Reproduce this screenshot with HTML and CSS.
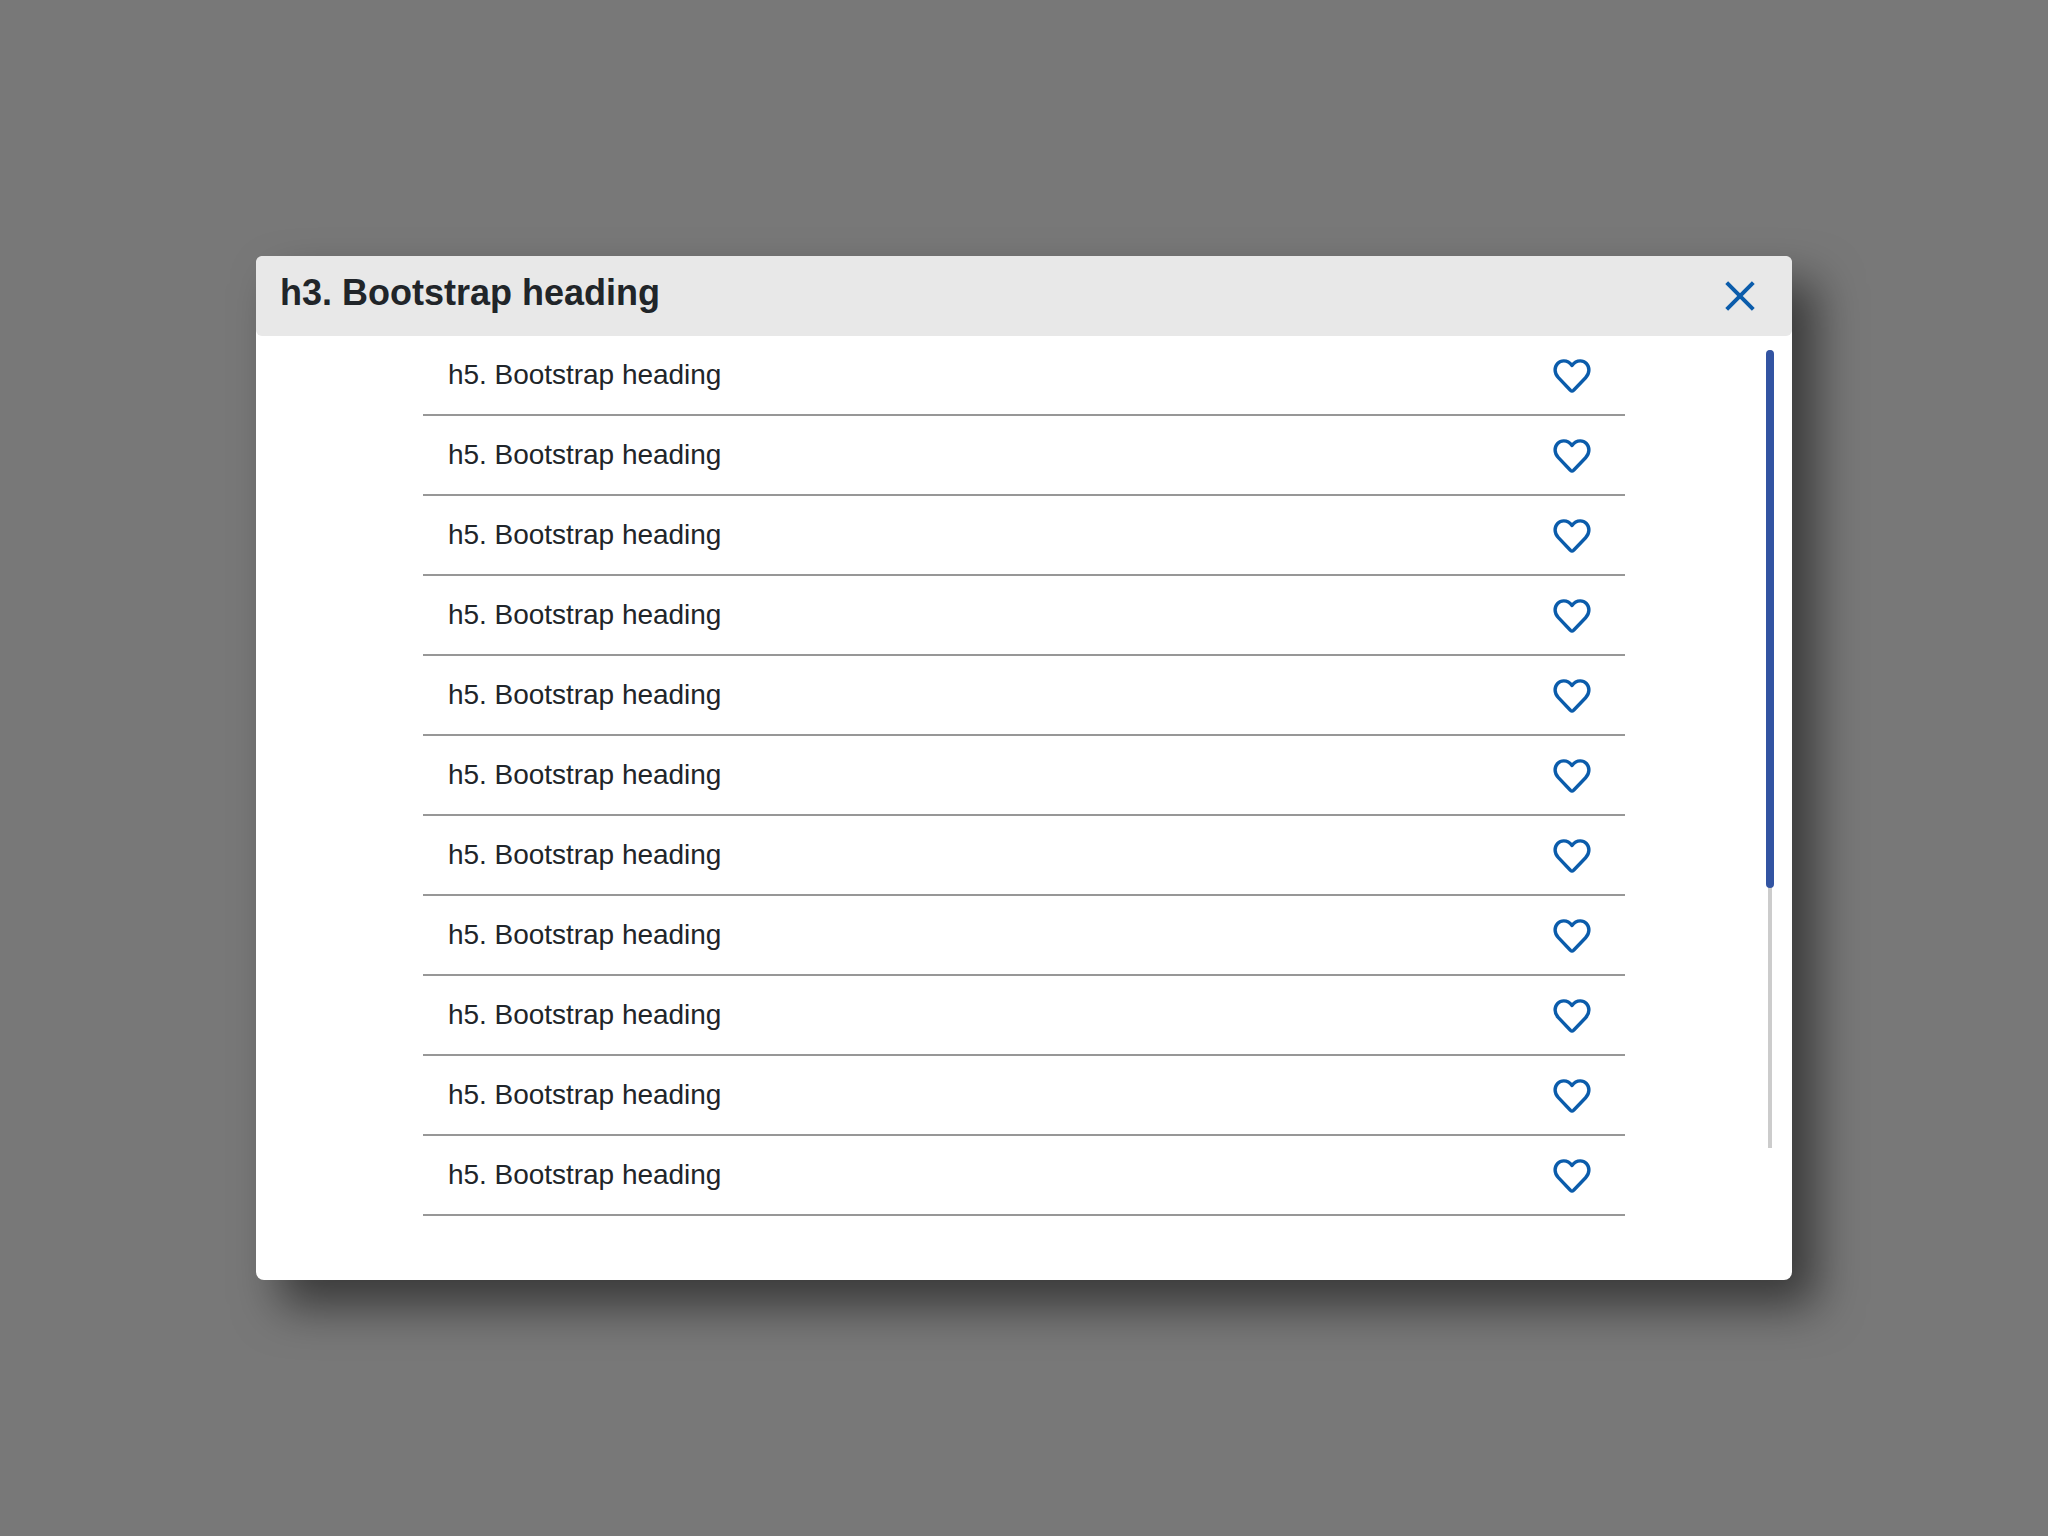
FILE: index.html
```html
<!DOCTYPE html>
<html lang="en">
<head>
<meta charset="utf-8">
<title>Bootstrap heading</title>
<link rel="stylesheet" href="styles.css">
</head>
<body>
<svg class="symbols" aria-hidden="true">
  <symbol id="heart" viewBox="0 0 38 34">
    <path d="M19 6.5C16.7 3.3 13.7 1.9 10.8 1.9C5.9 1.9 2.1 5.7 2.1 11.1C2.1 14.4 3.4 16.6 5.4 18.7L17.4 31.2Q19 32.6 20.6 31.2L32.6 18.7C34.6 16.6 35.9 14.4 35.9 11.1C35.9 5.7 32.1 1.9 27.2 1.9C24.3 1.9 21.3 3.3 19 6.5Z"/>
  </symbol>
</svg>
<section class="modal" role="dialog" aria-labelledby="title">
  <header class="modal-header">
    <h3 class="modal-title" id="title">h3. Bootstrap heading</h3>
    <button class="close" type="button" aria-label="Close"><svg class="close-icon" viewBox="0 0 30 30"><path d="M1.7 1.7L28.3 28.3M28.3 1.7L1.7 28.3"/></svg></button>
  </header>
  <div class="modal-body">
    <ul class="list">
      <li class="row"><h5 class="row-title">h5. Bootstrap heading</h5><svg class="heart"><use href="#heart"/></svg></li>
      <li class="row"><h5 class="row-title">h5. Bootstrap heading</h5><svg class="heart"><use href="#heart"/></svg></li>
      <li class="row"><h5 class="row-title">h5. Bootstrap heading</h5><svg class="heart"><use href="#heart"/></svg></li>
      <li class="row"><h5 class="row-title">h5. Bootstrap heading</h5><svg class="heart"><use href="#heart"/></svg></li>
      <li class="row"><h5 class="row-title">h5. Bootstrap heading</h5><svg class="heart"><use href="#heart"/></svg></li>
      <li class="row"><h5 class="row-title">h5. Bootstrap heading</h5><svg class="heart"><use href="#heart"/></svg></li>
      <li class="row"><h5 class="row-title">h5. Bootstrap heading</h5><svg class="heart"><use href="#heart"/></svg></li>
      <li class="row"><h5 class="row-title">h5. Bootstrap heading</h5><svg class="heart"><use href="#heart"/></svg></li>
      <li class="row"><h5 class="row-title">h5. Bootstrap heading</h5><svg class="heart"><use href="#heart"/></svg></li>
      <li class="row"><h5 class="row-title">h5. Bootstrap heading</h5><svg class="heart"><use href="#heart"/></svg></li>
      <li class="row"><h5 class="row-title">h5. Bootstrap heading</h5><svg class="heart"><use href="#heart"/></svg></li>
    </ul>
    <div class="scroll-track"><div class="scroll-thumb"></div></div>
  </div>
</section>
</body>
</html>
```
FILE: styles.css
```css
* { box-sizing: border-box; }
body {
  margin: 0;
  height: 100vh;
  display: flex;
  align-items: center;
  justify-content: center;
  background: #787878;
  color: #212529;
  font-family: "Liberation Sans", Arial, sans-serif;
}
.symbols { position: absolute; width: 0; height: 0; }
.modal {
  width: 1536px;
  height: 1024px;
  background: #fff;
  border-radius: 8px;
  box-shadow: 24px 26px 46px rgba(0, 0, 0, .53);
}
.modal-header {
  height: 80px;
  padding: 15px 37px 0 24px;
  display: flex;
  justify-content: space-between;
  align-items: flex-start;
  background: #e8e8e8;
  border-radius: 6px;
}
.modal-title {
  margin: 0;
  font-size: 36px;
  line-height: 43px;
  font-weight: 700;
}
.close {
  margin-top: 10px;
  padding: 0;
  border: 0;
  background: none;
  display: flex;
}
.close-icon {
  width: 30px;
  height: 30px;
  fill: none;
  stroke: #0b5cab;
  stroke-width: 4;
}
.modal-body {
  display: flex;
  align-items: flex-start;
  padding: 0 18px 0 167px;
  justify-content: space-between;
}
.list {
  width: 1202px;
  margin: 0;
  padding: 0;
  list-style: none;
}
.row {
  height: 80px;
  padding: 0 34px 0 25px;
  display: flex;
  align-items: center;
  justify-content: space-between;
  border-bottom: 2px solid #979797;
}
.row-title {
  margin: 0;
  font-size: 28px;
  line-height: 34px;
  font-weight: 400;
  letter-spacing: -.03px;
}
.heart {
  width: 38px;
  height: 34px;
  margin-top: 2px;
  fill: none;
  stroke: #0b5cab;
  stroke-width: 3.4;
  stroke-linejoin: round;
}
.scroll-track {
  width: 8px;
  height: 798px;
  margin-top: 14px;
  background: linear-gradient(#ccc, #ccc) center / 4px 100% no-repeat;
}
.scroll-thumb {
  height: 538px;
  border-radius: 4px;
  background: #3254a2;
}
```
